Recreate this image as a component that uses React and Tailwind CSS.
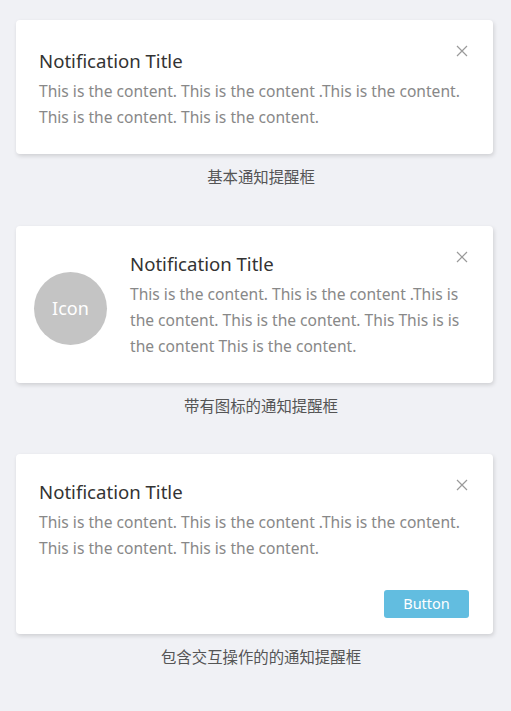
const font = { fontFamily: '"Noto Sans", "Noto Sans CJK SC", sans-serif' };

function CloseIcon() {
  return (
    <svg
      className="absolute right-[25px] top-[25px] h-3 w-3"
      viewBox="0 0 12 12"
      fill="none"
      stroke="#9a9a9a"
      strokeWidth="1.2"
    >
      <path d="M1 1l10 10M11 1L1 11" />
    </svg>
  );
}

function Title() {
  return <h3 className="text-[18.6px] leading-[26px] text-[#333]">Notification Title</h3>;
}

function Body({ children }) {
  return <p className="mt-1 text-[15.6px] leading-[26px] text-[#888]">{children}</p>;
}

function Caption({ children }) {
  return <p className="mt-[14px] pl-[11px] text-center text-[15.4px] leading-5 text-[#555]">{children}</p>;
}

const card = 'relative mx-[16px] w-[477px] rounded-[4px] bg-white shadow-[1px_2px_4px_rgba(0,0,0,0.14)]';

export default function App() {
  return (
    <div className="min-h-[711px] w-[511px] bg-[#f0f1f5] pt-[20px]" style={font}>
      <div className={`${card} pl-[23px] pr-[25px] pt-[28px] pb-[24px]`}>
        <CloseIcon />
        <Title />
        <Body>
          This is the content. This is the content .This is the content. This is the content. This is the
          content.
        </Body>
      </div>
      <Caption>基本通知提醒框</Caption>

      <div className={`${card} mt-[38px] flex items-center pl-[18px] pr-[25px] pt-[25px] pb-[24px]`}>
        <CloseIcon />
        <div className="mt-[7px] flex h-[73px] w-[73px] shrink-0 items-center justify-center rounded-full bg-[#c4c4c4] text-[18px] text-white">
          Icon
        </div>
        <div className="ml-[23px] min-w-0 flex-1">
          <Title />
          <Body>
            This is the content. This is the content .This is the content. This is the content. This This is
            is the content This is the content.
          </Body>
        </div>
      </div>
      <Caption>带有图标的通知提醒框</Caption>

      <div className={`${card} mt-[37px] pl-[23px] pr-[24px] pt-[25px] pb-[16px]`}>
        <CloseIcon />
        <Title />
        <Body>
          This is the content. This is the content .This is the content. This is the content. This is the
          content.
        </Body>
        <div className="mt-[29px] flex justify-end">
          <button className="h-[28px] w-[85px] rounded-[3px] bg-[#62bde0] text-[14.5px] text-white">Button</button>
        </div>
      </div>
      <Caption>包含交互操作的的通知提醒框</Caption>
    </div>
  );
}
